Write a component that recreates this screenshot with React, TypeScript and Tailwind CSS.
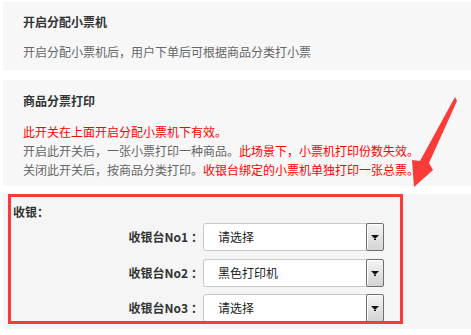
const rows = [
  { label: "收银台No1", value: "请选择" },
  { label: "收银台No2", value: "黑色打印机" },
  { label: "收银台No3", value: "请选择" },
];

function SelectBox({ value }: { value: string }) {
  return (
    <div className="relative flex h-[28px] w-[181px] shrink-0 items-center rounded-[3px] border border-[#c9c9c9] bg-white pl-[14px] text-[12px] leading-[20px] text-[#222]">
      {value}
      {/* old-school combo button */}
      <div className="absolute right-[-1px] top-[-1px] flex h-[28px] w-[18px] items-center justify-center rounded-[2px] border border-[#6f6f6f] bg-gradient-to-b from-[#f4f4f4] to-[#d4d4d4] shadow-[inset_1px_1px_0_#ffffff]">
        <svg width="8" height="6" viewBox="0 0 8 6">
          <path d="M0 1h8L4 5z" fill="#111" />
          <rect x="3" y="5" width="2" height="1" fill="#111" />
        </svg>
      </div>
    </div>
  );
}

export default function App() {
  return (
    <div className="relative h-[335px] w-[471px] overflow-hidden bg-white pl-[3px] pt-[2px] font-['Noto_Sans_CJK_SC','Noto_Sans',sans-serif]">
      {/* card 1 */}
      <div className="bg-[#f7f7f7] px-[20px] pb-[8px] pt-[10px]">
        <div className="text-[12px] font-bold leading-[20px] text-[#333]">开启分配小票机</div>
        <div className="mt-[10px] text-[12px] leading-[20px] text-[#666]">
          开启分配小票机后，用户下单后可根据商品分类打小票
        </div>
      </div>

      {/* card 2 */}
      <div className="mt-[10px] bg-[#f7f7f7] px-[20px] pb-[7px] pt-[11px]">
        <div className="text-[12px] font-bold leading-[20px] text-[#333]">商品分票打印</div>
        <div className="mt-[11px] text-[12px] leading-[19px] text-[#666]">
          <div className="text-[#ff0000]">此开关在上面开启分配小票机下有效。</div>
          <div>
            开启此开关后，一张小票打印一种商品。
            <span className="text-[#ff0000]">此场景下，小票机打印份数失效。</span>
          </div>
          <div>
            关闭此开关后，按商品分类打印。
            <span className="text-[#ff0000]">收银台绑定的小票机单独打印一张总票。</span>
          </div>
        </div>
      </div>

      {/* cashier section */}
      <div className="mt-[8px] h-[135px] bg-[#f5f5f5] pl-[5px]">
        <div className="h-[130px] w-[395px] overflow-hidden border-[3px] border-[#fb3a3a] pl-[2px] pt-[5px]">
          <div className="text-[12px] font-bold leading-[20px] text-[#333]">收银：</div>
          <div className="mt-[1px] flex flex-col gap-[7.5px]">
            {rows.map((r) => (
              <div key={r.label} className="flex items-center">
                <div className="w-[190px] shrink-0 text-right text-[12px] font-bold leading-[20px] text-[#333]">
                  {r.label}
                  <span className="ml-[3px]">：</span>
                </div>
                <SelectBox value={r.value} />
              </div>
            ))}
          </div>
        </div>
      </div>

      {/* annotation arrow */}
      <svg
        className="pointer-events-none absolute left-0 top-0"
        width="471"
        height="335"
        viewBox="0 0 471 335"
      >
        <polygon
          points="455,97 457,101 429,163 433,170 414,187 412,160 420,161"
          fill="#fb3a3a"
        />
      </svg>
    </div>
  );
}
